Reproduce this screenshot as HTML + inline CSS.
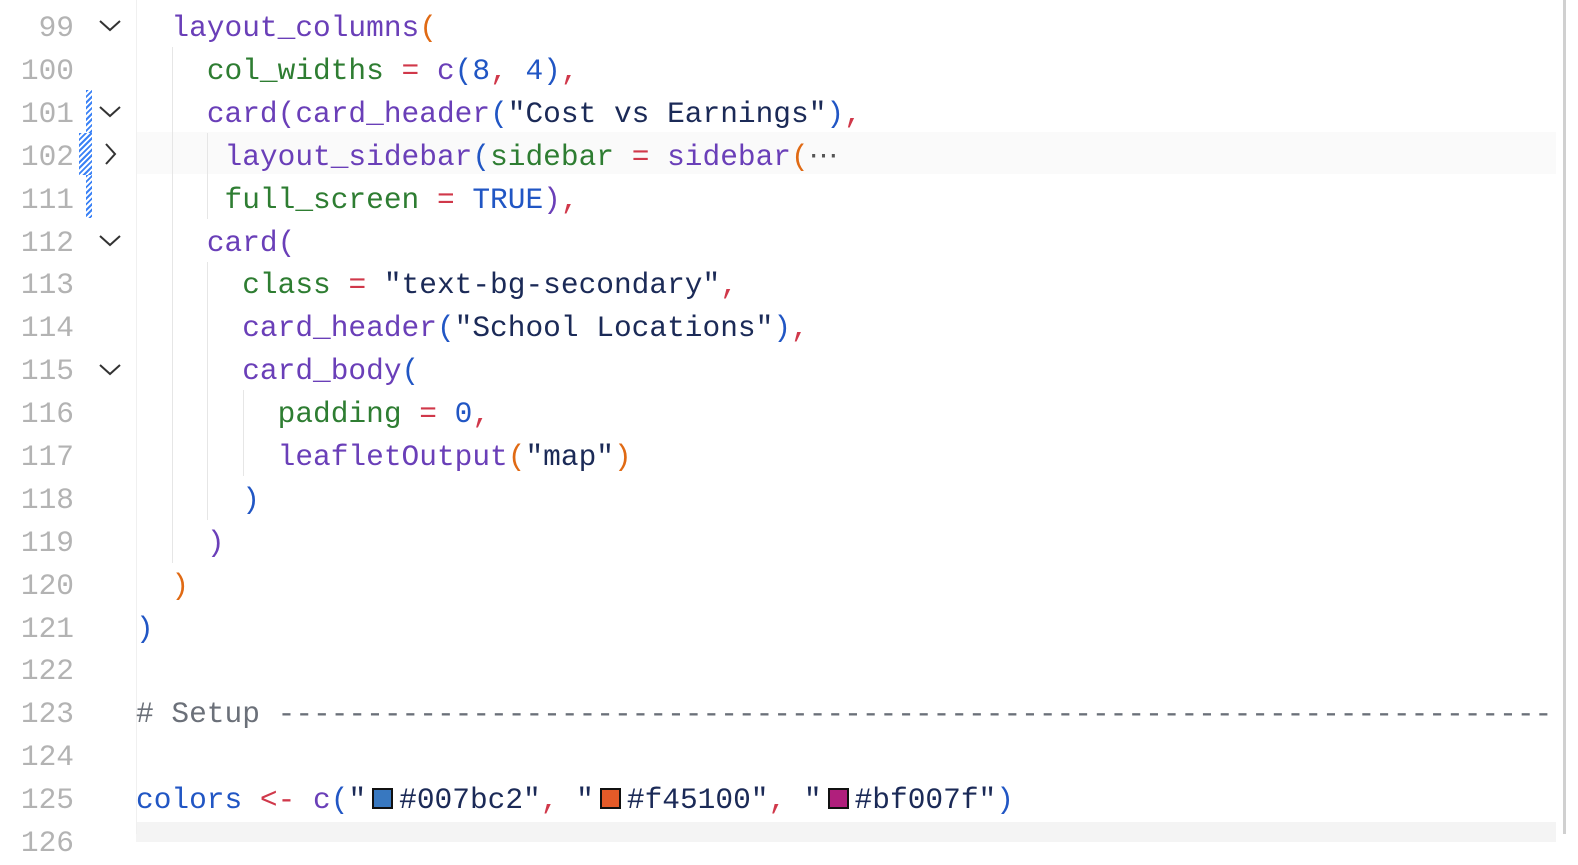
<!DOCTYPE html>
<html><head><meta charset="utf-8"><style>
body{margin:0;width:1578px;height:834px;overflow:hidden;background:#fff;font-family:"Liberation Mono",monospace;font-size:29.5px;}
.ln{position:absolute;left:0;width:74px;text-align:right;color:#b3b3b3;height:43px;line-height:43px;padding-top:4px}
.code{position:absolute;left:136px;white-space:pre;height:43px;line-height:43px;color:#1b2a57;padding-top:4px}
.f{color:#6a3fb8}.a{color:#2e7d32}.s{color:#1b2a57}.n{color:#2156c4}.o{color:#d0384a}
.p1{color:#e06a14}.p2{color:#6a3fb8}.p3{color:#2156c4}.c{color:#6b7079}.v{color:#2156c4}
.g{position:absolute;width:1px;background:#e6e6e6}
.chev{position:absolute;left:98px;width:24px;height:24px}
.sw{display:inline-block;width:17px;height:17px;border:2px solid #111;vertical-align:-1px;margin:0 6px 0 6px}
</style></head><body>
<div style="position:absolute;left:136px;top:132px;width:1420px;height:42px;background:#fafafa"></div>
<div style="position:absolute;left:136px;top:822px;width:1420px;height:20px;background:#f4f4f4"></div>
<div style="position:absolute;left:1563px;top:0;width:3px;height:834px;background:#d0d0d0"></div>
<div class="g" style="left:136px;top:0;height:834px;background:#f0f0f0"></div>
<div class="g" style="left:172px;top:47px;height:516px"></div>
<div class="g" style="left:207px;top:133px;height:86px"></div>
<div class="g" style="left:207px;top:262px;height:258px"></div>
<div class="g" style="left:243px;top:390px;height:86px"></div>
<div style="position:absolute;left:86px;top:90px;width:6px;height:128px;background:repeating-linear-gradient(135deg,#3b82f6 0 2px,#fff 2px 4px)"></div>
<div style="position:absolute;left:79px;top:133px;width:13px;height:42px;background:repeating-linear-gradient(135deg,#3b82f6 0 2px,#fff 2px 4px)"></div>
<svg class="chev" style="top:13px" viewBox="0 0 24 24"><path d="M2 8l10 9 10-9" fill="none" stroke="#333" stroke-width="2"/></svg>
<svg class="chev" style="top:99px" viewBox="0 0 24 24"><path d="M2 8l10 9 10-9" fill="none" stroke="#333" stroke-width="2"/></svg>
<svg class="chev" style="top:142px" viewBox="0 0 24 24"><path d="M8 2l9 10-9 10" fill="none" stroke="#333" stroke-width="2"/></svg>
<svg class="chev" style="top:228px" viewBox="0 0 24 24"><path d="M2 8l10 9 10-9" fill="none" stroke="#333" stroke-width="2"/></svg>
<svg class="chev" style="top:357px" viewBox="0 0 24 24"><path d="M2 8l10 9 10-9" fill="none" stroke="#333" stroke-width="2"/></svg>

<div class="ln" style="top:3px">99</div><div class="code" style="top:3px">  <span class="f">layout_columns</span><span class="p1">(</span></div>
<div class="ln" style="top:46px">100</div><div class="code" style="top:46px">    <span class="a">col_widths</span> <span class="o">=</span> <span class="f">c</span><span class="p3">(</span><span class="n">8</span><span class="o">,</span> <span class="n">4</span><span class="p3">)</span><span class="o">,</span></div>
<div class="ln" style="top:89px">101</div><div class="code" style="top:89px">    <span class="f">card</span><span class="p2">(</span><span class="f">card_header</span><span class="p3">(</span>"Cost vs Earnings"<span class="p3">)</span><span class="o">,</span></div>
<div class="ln" style="top:132px">102</div><div class="code" style="top:132px">     <span class="f">layout_sidebar</span><span class="p3">(</span><span class="a">sidebar</span> <span class="o">=</span> <span class="f">sidebar</span><span class="p1">(</span><span style="color:#555">⋯</span></div>
<div class="ln" style="top:175px">111</div><div class="code" style="top:175px">     <span class="a">full_screen</span> <span class="o">=</span> <span class="n">TRUE</span><span class="p2">)</span><span class="o">,</span></div>
<div class="ln" style="top:218px">112</div><div class="code" style="top:218px">    <span class="f">card</span><span class="p2">(</span></div>
<div class="ln" style="top:260px">113</div><div class="code" style="top:260px">      <span class="a">class</span> <span class="o">=</span> "text-bg-secondary"<span class="o">,</span></div>
<div class="ln" style="top:303px">114</div><div class="code" style="top:303px">      <span class="f">card_header</span><span class="p3">(</span>"School Locations"<span class="p3">)</span><span class="o">,</span></div>
<div class="ln" style="top:346px">115</div><div class="code" style="top:346px">      <span class="f">card_body</span><span class="p3">(</span></div>
<div class="ln" style="top:389px">116</div><div class="code" style="top:389px">        <span class="a">padding</span> <span class="o">=</span> <span class="n">0</span><span class="o">,</span></div>
<div class="ln" style="top:432px">117</div><div class="code" style="top:432px">        <span class="f">leafletOutput</span><span class="p1">(</span>"map"<span class="p1">)</span></div>
<div class="ln" style="top:475px">118</div><div class="code" style="top:475px">      <span class="p3">)</span></div>
<div class="ln" style="top:518px">119</div><div class="code" style="top:518px">    <span class="p2">)</span></div>
<div class="ln" style="top:561px">120</div><div class="code" style="top:561px">  <span class="p1">)</span></div>
<div class="ln" style="top:604px">121</div><div class="code" style="top:604px"><span class="p3">)</span></div>
<div class="ln" style="top:646px">122</div>
<div class="ln" style="top:689px">123</div><div class="code c" style="top:689px"># Setup ------------------------------------------------------------------------</div>
<div class="ln" style="top:732px">124</div>
<div class="ln" style="top:775px">125</div><div class="code" style="top:775px"><span class="v">colors</span> <span class="o">&lt;-</span> <span class="f">c</span><span class="p3">(</span>"<span class="sw" style="background:#3878c0"></span>#007bc2"<span class="o">,</span> "<span class="sw" style="background:#e45a28"></span>#f45100"<span class="o">,</span> "<span class="sw" style="background:#b01f7c"></span>#bf007f"<span class="p3">)</span></div>
<div class="ln" style="top:818px">126</div>
</body></html>
